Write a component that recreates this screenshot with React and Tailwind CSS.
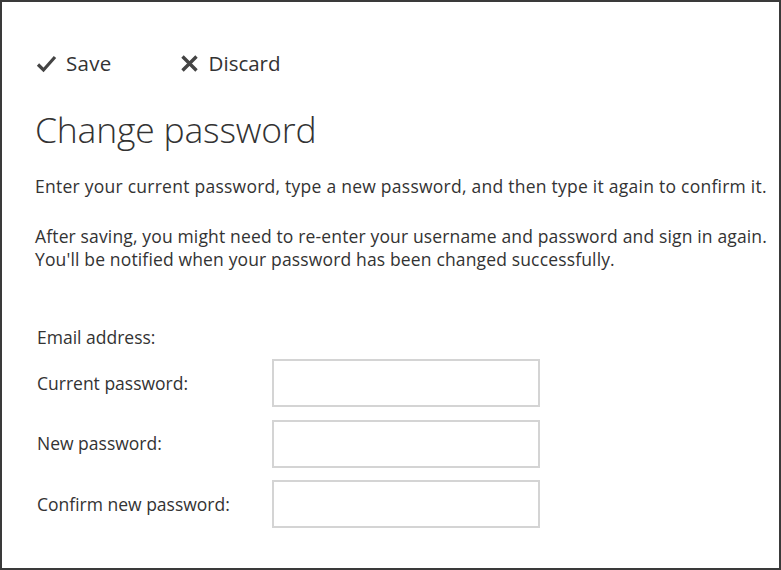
import React from "react";

function CheckIcon() {
  return (
    <svg width="21" height="19" viewBox="0 0 21 19" className="shrink-0">
      <path d="M2 10.5 L7.5 16 L19 3" fill="none" stroke="#444" strokeWidth="3.2" strokeLinecap="butt" strokeLinejoin="miter" />
    </svg>
  );
}

function XIcon() {
  return (
    <svg width="19" height="19" viewBox="0 0 19 19" className="shrink-0">
      <path d="M2.5 2.5 L16.5 16.5 M16.5 2.5 L2.5 16.5" fill="none" stroke="#444" strokeWidth="3.4" />
    </svg>
  );
}

function Field({ label }) {
  return (
    <div className="flex items-center h-[48px]">
      <div className="w-[235px] shrink-0">{label}</div>
      <div className="w-[268px] h-[48px] shrink-0 border-2 border-[#d4d4d4] bg-white" />
    </div>
  );
}

export default function App() {
  return (
    <div
      className="w-[781px] h-[570px] border-2 border-[#3a3a3a] bg-white text-[#333] overflow-hidden"
      style={{ fontFamily: '"Open Sans", "Noto Sans", sans-serif' }}
    >
      <div className="pl-[33px]">
        <div className="flex items-center gap-[68px] mt-[49px] h-[24px] text-[20.5px]">
          <div className="flex items-center gap-[9px] ml-[1px]">
            <CheckIcon />
            <span className="tracking-[0.3px]">Save</span>
          </div>
          <div className="flex items-center gap-[10px]">
            <XIcon />
            <span>Discard</span>
          </div>
        </div>
        <h1 className="mt-[30px] text-[35.5px] font-light leading-[48px] tracking-[-0.2px]">Change password</h1>
        <p className="mt-[22px] text-[17.5px] leading-[23px] tracking-[0.25px]">
          Enter your current password, type a new password, and then type it again to confirm it.
        </p>
        <p className="mt-[27px] text-[17.5px] leading-[23px] tracking-[0.15px]">
          After saving, you might need to re-enter your username and password and sign in again.
          <br />
          You'll be notified when your password has been changed successfully.
        </p>
        <div className="mt-[55px] text-[17.5px] pl-[2px]">
          <div className="leading-[22px]">Email address:</div>
          <div className="mt-[11px] flex flex-col gap-[12.5px]">
            <Field label="Current password:" />
            <Field label="New password:" />
            <Field label="Confirm new password:" />
          </div>
        </div>
      </div>
    </div>
  );
}
